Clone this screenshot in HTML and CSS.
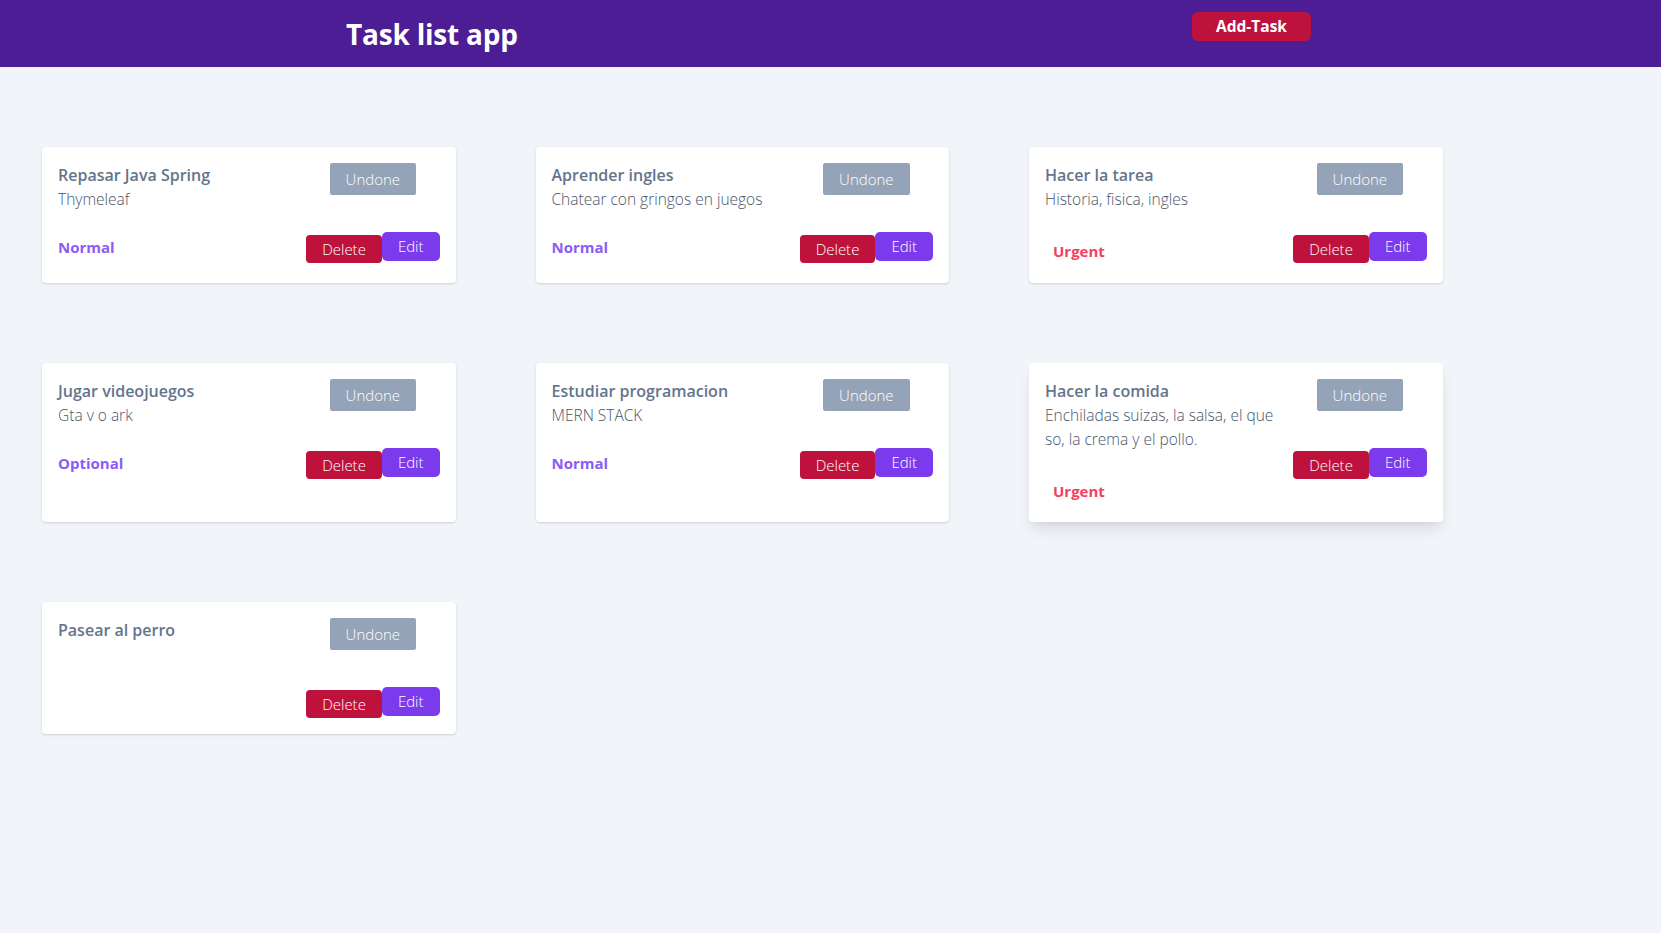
FILE: index.html
```html
<!DOCTYPE html>
<html lang="es">
<head>
<meta charset="utf-8">
<title>Task list app</title>
<link rel="stylesheet" href="styles.css">
</head>
<body>
<header class="topbar">
  <h1 class="brand">Task list app</h1>
  <button class="add-btn">Add-Task</button>
</header>
<main class="board">
  <div class="card">
    <div class="info">
      <div class="task-title">Repasar Java Spring</div>
      <div class="task-desc">Thymeleaf</div>
      <div class="prio prio-normal">Normal</div>
    </div>
    <div class="actions">
      <button class="btn-undone">Undone</button>
      <div class="btn-row"><button class="btn-delete">Delete</button><button class="btn-edit">Edit</button></div>
    </div>
  </div>
  <div class="card">
    <div class="info">
      <div class="task-title">Aprender ingles</div>
      <div class="task-desc">Chatear con gringos en juegos</div>
      <div class="prio prio-normal">Normal</div>
    </div>
    <div class="actions">
      <button class="btn-undone">Undone</button>
      <div class="btn-row"><button class="btn-delete">Delete</button><button class="btn-edit">Edit</button></div>
    </div>
  </div>
  <div class="card">
    <div class="info">
      <div class="task-title">Hacer la tarea</div>
      <div class="task-desc">Historia, fisica, ingles</div>
      <div class="prio prio-urgent">Urgent</div>
    </div>
    <div class="actions">
      <button class="btn-undone">Undone</button>
      <div class="btn-row"><button class="btn-delete">Delete</button><button class="btn-edit">Edit</button></div>
    </div>
  </div>
  <div class="card">
    <div class="info">
      <div class="task-title">Jugar videojuegos</div>
      <div class="task-desc">Gta v o ark</div>
      <div class="prio prio-normal">Optional</div>
    </div>
    <div class="actions">
      <button class="btn-undone">Undone</button>
      <div class="btn-row"><button class="btn-delete">Delete</button><button class="btn-edit">Edit</button></div>
    </div>
  </div>
  <div class="card">
    <div class="info">
      <div class="task-title">Estudiar programacion</div>
      <div class="task-desc">MERN STACK</div>
      <div class="prio prio-normal">Normal</div>
    </div>
    <div class="actions">
      <button class="btn-undone">Undone</button>
      <div class="btn-row"><button class="btn-delete">Delete</button><button class="btn-edit">Edit</button></div>
    </div>
  </div>
  <div class="card card-raised">
    <div class="info">
      <div class="task-title">Hacer la comida</div>
      <div class="task-desc">Enchiladas suizas, la salsa, el queso, la crema y el pollo.</div>
      <div class="prio prio-urgent">Urgent</div>
    </div>
    <div class="actions">
      <button class="btn-undone">Undone</button>
      <div class="btn-row"><button class="btn-delete">Delete</button><button class="btn-edit">Edit</button></div>
    </div>
  </div>
  <div class="card">
    <div class="info">
      <div class="task-title">Pasear al perro</div>
    </div>
    <div class="actions">
      <button class="btn-undone">Undone</button>
      <div class="btn-row"><button class="btn-delete">Delete</button><button class="btn-edit">Edit</button></div>
    </div>
  </div>
</main>
</body>
</html>
```

FILE: styles.css
```css
* { box-sizing: border-box; }
html, body { margin: 0; padding: 0; }
body {
  background: #f1f5f9;
  font-family: "Open Sans", "Noto Sans", sans-serif;
  min-height: 933px;
}
button { font-family: inherit; border: none; cursor: pointer; }

.topbar {
  height: 67px;
  background: #4c1d95;
  display: flex;
  justify-content: space-between;
  align-items: flex-start;
  padding: 12px 350px 0 346px;
}
.brand {
  margin: 4px 0 0;
  color: #fff;
  font-size: 28px;
  line-height: 36px;
  font-weight: 700;
  letter-spacing: -0.2px;
}
.add-btn {
  background: #be123c;
  color: #fff;
  font-weight: 700;
  font-size: 15.5px;
  line-height: 21px;
  padding: 4px 24px;
  border-radius: 6px;
}

.board {
  display: grid;
  grid-template-columns: repeat(3, 413.5px);
  column-gap: 80px;
  row-gap: 80px;
  padding: 80px 0 0 42px;
  align-items: stretch;
}
.card {
  background: #fff;
  border-radius: 4px;
  padding: 16px;
  display: flex;
  justify-content: space-between;
  align-items: flex-start;
  box-shadow: 0 1px 3px rgba(0,0,0,0.1), 0 1px 2px rgba(0,0,0,0.06);
}
.card-raised {
  box-shadow: 0 10px 15px -3px rgba(0,0,0,0.1), 0 4px 6px -2px rgba(0,0,0,0.05);
}
.info {
  width: 61%;
  line-height: 24px;
}
.task-title {
  color: #64748b;
  font-weight: 600;
  font-size: 16px;
}
.task-desc {
  color: #475569;
  font-weight: 300;
  font-size: 15.5px;
  word-break: break-all;
}
.prio {
  font-weight: 700;
  font-size: 15px;
}
.prio-normal {
  color: #8b5cf6;
  margin-top: 24px;
  margin-bottom: 8px;
}
.prio-urgent {
  color: #f43f5e;
  margin-top: 28px;
  margin-bottom: 3px;
  padding: 0 8px;
}
.actions {
  display: flex;
  flex-direction: column;
  align-items: center;
}
.btn-undone {
  background: #94a3b8;
  color: #fff;
  font-weight: 300;
  font-size: 15px;
  line-height: 20px;
  padding: 6px 16px;
  border-radius: 2px;
  margin-bottom: 37px;
}
.btn-row {
  display: flex;
  align-items: flex-start;
}
.btn-delete {
  background: #be123c;
  color: #fff;
  font-weight: 300;
  font-size: 15px;
  line-height: 20px;
  padding: 4px 16px;
  border-radius: 4px;
  margin-top: 3px;
}
.btn-edit {
  background: #7c3aed;
  color: #fff;
  font-weight: 300;
  font-size: 15px;
  line-height: 21px;
  padding: 4px 16px;
  border-radius: 5px;
}
```
